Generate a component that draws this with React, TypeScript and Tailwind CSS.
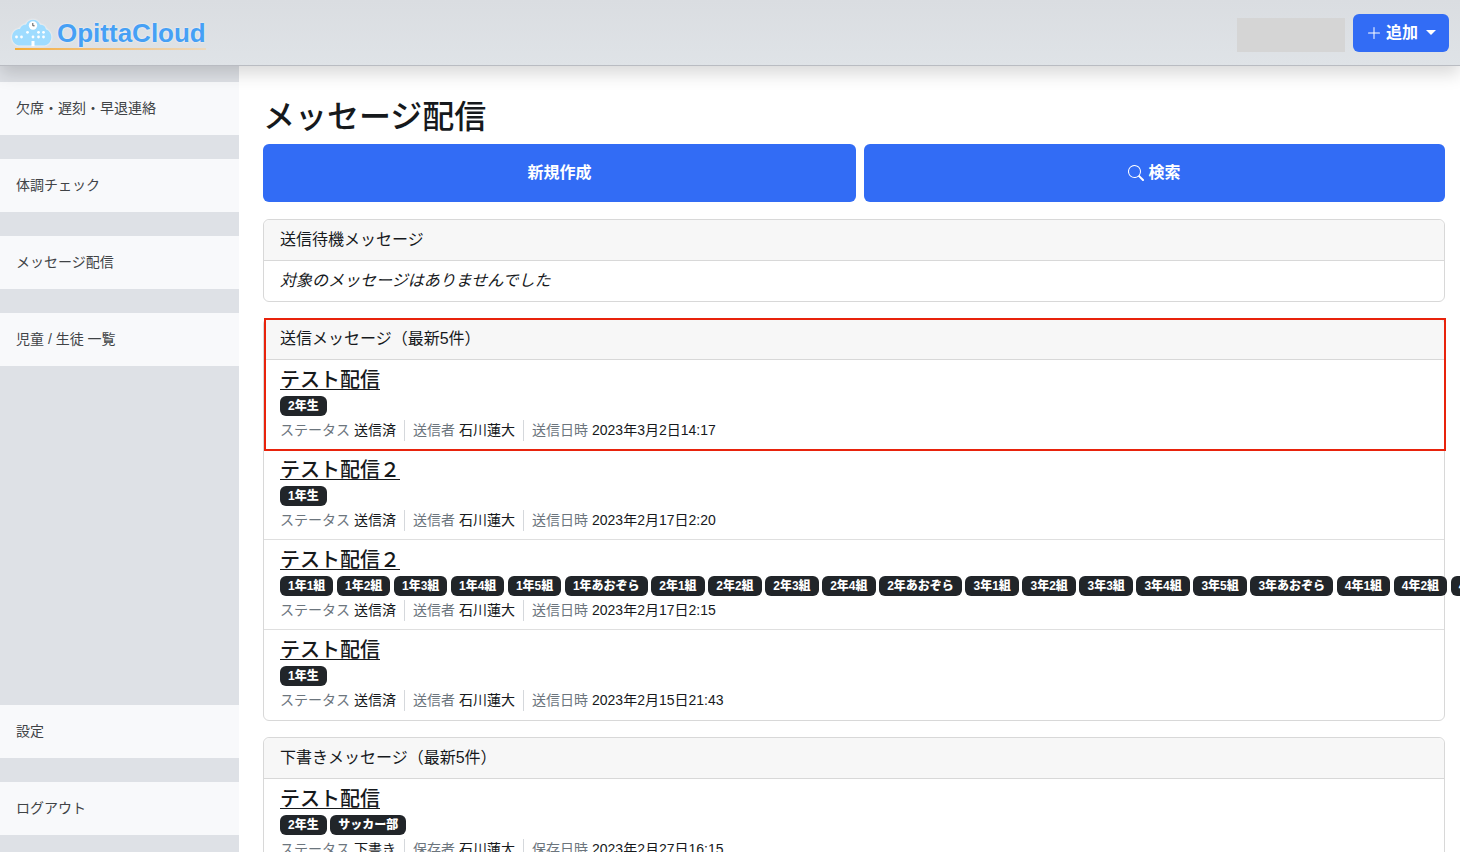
import { BsPlusLg, BsSearch } from "react-icons/bs";

type Message = {
    title: string;
    groups: string[];
    status: string;
    personLabel: string;
    person: string;
    dateLabel: string;
    date: string;
};

const sent = { status: "送信済", personLabel: "送信者", person: "石川蓮大", dateLabel: "送信日時" };
const draft = { status: "下書き", personLabel: "保存者", person: "石川蓮大", dateLabel: "保存日時" };

const allClasses = [
    "1年1組", "1年2組", "1年3組", "1年4組", "1年5組", "1年あおぞら",
    "2年1組", "2年2組", "2年3組", "2年4組", "2年あおぞら",
    "3年1組", "3年2組", "3年3組", "3年4組", "3年5組", "3年あおぞら",
    "4年1組", "4年2組", "4年3組",
];

const sentMessages: Message[] = [
    { title: "テスト配信", groups: ["2年生"], date: "2023年3月2日14:17", ...sent },
    { title: "テスト配信２", groups: ["1年生"], date: "2023年2月17日2:20", ...sent },
    { title: "テスト配信２", groups: allClasses, date: "2023年2月17日2:15", ...sent },
    { title: "テスト配信", groups: ["1年生"], date: "2023年2月15日21:43", ...sent },
];

const draftMessages: Message[] = [
    { title: "テスト配信", groups: ["2年生", "サッカー部"], date: "2023年2月27日16:15", ...draft },
];

const mainLinks = ["欠席・遅刻・早退連絡", "体調チェック", "メッセージ配信", "児童 / 生徒 一覧"];
const footerLinks = ["設定", "ログアウト"];

function Logo() {
    return (
        <a href="#" className="flex flex-col pt-1">
            <span className="flex items-center gap-1">
                <svg width="42" height="28" viewBox="0 0 42 28" aria-hidden="true" className="drop-shadow-[0_0_1px_white]">
                    <path
                        d="M9.500 26.500C4.500 26.500 1 23 1 18.200c0-4.800 3.600-8.200 8-8.400.8-2.600 3-4.200 6-4.200C16.300 2.400 18.900.8 22 .8s5.700 1.600 7 4.800c3.400.1 5.400 2 6 4.600 3 .9 5.400 4.200 5.400 8 0 4.800-3.600 8.300-8.400 8.300z"
                        fill="#9fdcff"
                    />
                    <circle cx="22" cy="6.500" r="4.200" fill="#fff" />
                    <path d="M21.800 4v2.800h1.800" stroke="#555" fill="none" />
                    <g fill="#fff">
                        <circle cx="5.500" cy="18" r="1.400" />
                        <circle cx="10.500" cy="18" r="1.400" />
                        <circle cx="16.500" cy="13.300" r="1.400" />
                        <circle cx="22" cy="18" r="1.400" />
                        <circle cx="27.500" cy="13.300" r="1.400" />
                        <circle cx="32.500" cy="13.300" r="1.400" />
                        <circle cx="27.500" cy="18" r="1.400" />
                        <circle cx="32.500" cy="18" r="1.400" />
                        <rect x="20.500" y="22" width="3" height="5" />
                    </g>
                </svg>
                <span className="text-[26px] leading-7 font-bold text-[#46a0f5] text-shadow-[0_0_2px_white]">OpittaCloud</span>
            </span>
            <span className="mt-px ml-1 h-0.5 bg-linear-to-r from-[#f5ad35] to-[#ecd9bd]" />
        </a>
    );
}

function SideLinks({ links }: { links: string[] }) {
    return (
        <ul className="flex flex-col gap-6">
            {links.map((link) => (
                <li key={link}>
                    <a href="#" className="block bg-[#f8f9fb] p-4 text-[14px] leading-[21px] text-[#404346]">
                        {link}
                    </a>
                </li>
            ))}
        </ul>
    );
}

function MessageItem({ message }: { message: Message }) {
    return (
        <li className="flex flex-col gap-1 border-b border-[#dfdfdf] px-4 py-2 last:border-transparent">
            <h3 className="text-[20px] leading-6 font-medium">
                <a href="#" className="underline decoration-1 underline-offset-2">{message.title}</a>
            </h3>
            <div className="h-5 text-[13px] leading-5 whitespace-nowrap">
                {message.groups.map((group) => (
                    <span key={group}>
                        <span className="inline-block rounded-md bg-[#212529] px-2 py-1 align-top text-[12px] leading-3 font-black text-white">
                            {group}
                        </span>{" "}
                    </span>
                ))}
            </div>
            <dl className="flex text-[14px] leading-[21px]">
                <div className="flex gap-1 border-r border-[#d5d8dc] pr-2">
                    <dt className="text-[#6c757d]">ステータス</dt>
                    <dd>{message.status}</dd>
                </div>
                <div className="flex gap-1 border-r border-[#d5d8dc] px-2">
                    <dt className="text-[#6c757d]">{message.personLabel}</dt>
                    <dd>{message.person}</dd>
                </div>
                <div className="flex gap-1 pl-2">
                    <dt className="text-[#6c757d]">{message.dateLabel}</dt>
                    <dd>{message.date}</dd>
                </div>
            </dl>
        </li>
    );
}

function Card({ title, messages, highlight }: { title: string; messages: Message[]; highlight?: boolean }) {
    return (
        <section className="relative rounded-md border border-[#d8d8d8]">
            <h2 className="rounded-t-md border-b border-[#d8d8d8] bg-[#f7f7f7] px-4 py-2 leading-6">{title}</h2>
            {messages.length === 0 ? (
                <p className="px-4 py-2 leading-6 italic">対象のメッセージはありませんでした</p>
            ) : (
                <ul>
                    {messages.map((message) => (
                        <MessageItem key={message.date} message={message} />
                    ))}
                </ul>
            )}
            {/* Red frame round the header and the newest message */}
            {highlight && (
                <div className="pointer-events-none absolute -top-px -right-0.5 left-0 h-[133px] border-2 border-[#e8230c]" />
            )}
        </section>
    );
}

export default function App() {
    return (
        <div className="flex h-screen flex-col overflow-hidden bg-white font-['Liberation_Sans','Noto_Sans_CJK_JP',sans-serif] text-base text-[#16191c]">
            <header className="relative z-10 flex h-[66px] shrink-0 items-center justify-between border-b border-[#b9bcc2] bg-linear-to-b from-[#dadde1] to-[#dfe3e7] px-[11px] shadow-[0_8px_16px_rgba(0,0,0,0.15)]">
                <Logo />
                <div className="flex items-end gap-2">
                    <div className="h-[34px] w-[108px] bg-[#d5d5d5]" />
                    <button type="button" className="flex items-center rounded-md bg-[#326cf5] px-[13px] py-[7px] leading-6 font-semibold text-white">
                        <BsPlusLg className="mr-1" />
                        追加
                        <span className="ml-2 border-x-5 border-t-5 border-x-transparent border-t-white" />
                    </button>
                </div>
            </header>
            <div className="flex min-h-0 flex-1">
                <nav className="flex w-[239px] shrink-0 flex-col justify-between bg-[#dee1e6] pt-4 pb-[17px]">
                    <SideLinks links={mainLinks} />
                    <SideLinks links={footerLinks} />
                </nav>
                <main className="min-w-0 flex-1 overflow-hidden pt-8 pr-[15px] pl-6">
                    <h1 className="mb-2 text-[32px] leading-[38px] font-medium">メッセージ配信</h1>
                    <div className="mb-[17px] flex gap-2">
                        <button type="button" className="flex-auto rounded-md bg-[#326cf5] py-[17px] leading-6 font-semibold text-white">
                            新規作成
                        </button>
                        <button type="button" className="flex flex-auto items-center justify-center gap-1 rounded-md bg-[#326cf5] py-[17px] leading-6 font-semibold text-white">
                            <BsSearch />
                            検索
                        </button>
                    </div>
                    <div className="flex flex-col gap-4">
                        <Card title="送信待機メッセージ" messages={[]} />
                        <Card title="送信メッセージ（最新5件）" messages={sentMessages} highlight />
                        <Card title="下書きメッセージ（最新5件）" messages={draftMessages} />
                    </div>
                </main>
            </div>
        </div>
    );
}
